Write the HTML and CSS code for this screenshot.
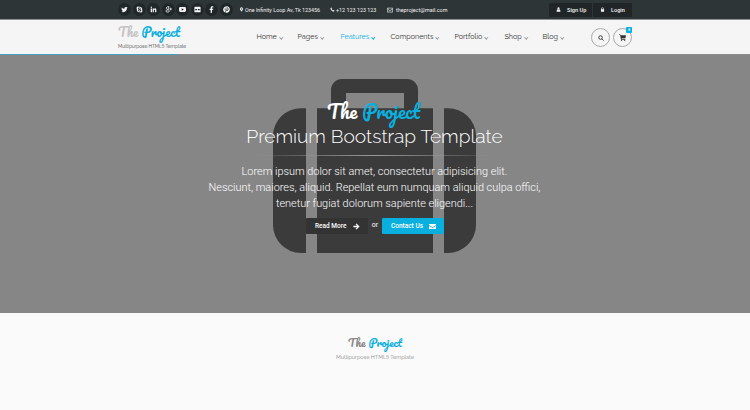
FILE: index.html
```html
<!DOCTYPE html>
<html lang="en">
<head>
<meta charset="utf-8">
<title>The Project</title>
<link rel="stylesheet" href="styles.css">
</head>
<body>
<div class="topbar">
  <div class="container topbar-inner">
    <ul class="social">
      <li><svg viewBox="0 0 16 16"><path d="M15 3.6l-1.500 1.500C13.600 10 10 14 5 14c-1.600 0-3-.4-4-1.200 1.500.1 2.800-.3 3.800-1.100-1.300-.1-2.200-.9-2.500-2h1.100C2 9.300 1.200 8.200 1.200 6.800l1.200.3C1.200 6.200.9 4.600 1.700 3.200 3.200 5 5.300 6 7.800 6.200 7.300 3.800 9 2 10.800 2c.9 0 1.600.3 2.200.9l1.700-.6-1.100 1.500z"/></svg></li>
      <li><svg viewBox="0 0 16 16"><path fill-rule="evenodd" d="M4.500 1C6 1 6.500 1.800 7 1.900 12 1.200 15 5 14.100 9c.9 1 1 2.500.4 3.700-.9 2-3.500 2.700-5.500 1.400C4 15 1 11.500 1.900 7 .3 4.200 2 1 4.500 1zm3.700 2.700C3.800 3.500 3.500 8 6.500 8.500l2.500.6c1.300.4.600 1.800-.7 1.800-2 0-1.800-1.500-3-1.500-2.200 1 .5 3 3 3 4.800 0 4.800-4.500 1.700-5.100L7.300 6.600C6 6.100 7 5.200 8.100 5.200c1.600 0 1.500 1.100 2.600 1.100 2-.8 0-2.600-2.500-2.600z"/></svg></li>
      <li><svg viewBox="0 0 16 16"><path d="M1.500 5.500h3V14h-3zM6 5.500h2.900v1.200C10.500 4.400 14.500 5 14.500 9v5h-3V9.500c0-2.500-2.600-2.200-2.600 0V14H6z"/><circle cx="3" cy="3" r="1.600"/></svg></li>
      <li><svg viewBox="0 0 16 16"><path fill="none" stroke="currentColor" stroke-width="1.800" d="M10 1.900H6.500C2 2 2 7.500 6 7.500c4-.2 3.500-5.300.5-5.600M6.500 7.500c0 1.500 3.500 2 3.500 4.200 0 3.200-8 3.200-8 0C2 9.500 5 9 7.500 9.300M13 4v6M10.500 7h5"/></svg></li>
      <li><svg viewBox="0 0 16 16"><path fill-rule="evenodd" d="M3 2.500h10q3 0 3 3v5q0 3-3 3H3q-3 0-3-3v-5q0-3 3-3zm3.300 2.800v5.400L11 8z"/></svg></li>
      <li><svg viewBox="0 0 16 16"><path fill-rule="evenodd" d="M2.500 1.500h11q1.500 0 1.500 1.500v10q0 1.500-1.500 1.500h-11Q1 14.500 1 13V3q0-1.500 1.500-1.500zM3 7v2.500h4V7zm6 0v2.500h4V7z"/></svg></li>
      <li><svg viewBox="0 0 16 16"><path d="M12 .8v2.600h-1.600C9.200 3.400 9 4 9 4.800v1.500h2.900l-.4 2.800H9V16H6V9.100H3.700V6.300H6V4.200C6 1.800 7.500.6 9.700.6z"/></svg></li>
      <li><svg viewBox="0 0 16 16"><path fill-rule="evenodd" d="M8 .5a7.500 7.500 0 11-2 14.700l1-3 .5-1.700c3 1.500 5-1 5-3.800C12.500 2.500 4 2 3.700 7c0 1.200.5 2.300 1.500 2.700l.4-1C4 6.500 5.500 4 8 4c3.500 0 3.200 5.600.8 5.600-1 0-1.300-.8-1-1.600l.6-2.200C7.300 4.700 6 6.500 6.600 8L5 14.900A7.500 7.500 0 018 .5z"/></svg></li>
    </ul>
    <ul class="contact">
      <li class="address"><svg viewBox="0 0 16 16"><path fill-rule="evenodd" d="M8 1a5 5 0 015 5c0 3-3.500 5.500-5 9-1.500-3.500-5-6-5-9a5 5 0 015-5zm0 3a2 2 0 100 4 2 2 0 000-4z"/></svg><span>One Infinity Loop Av, Tk 123456</span></li>
      <li class="phone"><svg viewBox="0 0 16 16"><path d="M2 3l2.500-1.500 2 3.500L5 6.500C6 8.500 7.500 10 9.500 11L11 9.500l3.500 2L13 14C8 16 0 8 2 3z"/></svg><span>+12 123 123 123</span></li>
      <li class="email"><svg viewBox="0 0 16 16"><path fill="none" stroke="currentColor" stroke-width="1.700" d="M1 3h14v10.500H1zM1 5l7 5 7-5"/></svg><span>theproject@mail.com</span></li>
    </ul>
    <div class="account">
      <a class="acct signup"><svg viewBox="0 0 16 16"><circle cx="8" cy="4.500" r="3.500"/><path d="M2 15q-1-7 3.500-7.500 2.500 1.500 5 0Q15 8 14 15z"/></svg><span>Sign Up</span></a>
      <a class="acct login"><svg viewBox="0 0 16 16"><path fill-rule="evenodd" d="M3 7h1V5.500a4 4 0 018 0V7h1v8H3zm3 0h4V5.500a2 2 0 00-4 0z"/></svg><span>Login</span></a>
    </div>
  </div>
</div>
<header class="header">
  <div class="container header-inner">
    <div class="brand">
      <div class="logo"><span>The</span> <b>Project</b></div>
      <div class="slogan">Multipurpose HTML5 Template</div>
    </div>
    <nav class="nav">
      <a class="n-home"><span>Home</span><i></i></a>
      <a class="n-pages"><span>Pages</span><i></i></a>
      <a class="n-features active"><span>Features</span><i></i></a>
      <a class="n-components"><span>Components</span><i></i></a>
      <a class="n-portfolio"><span>Portfolio</span><i></i></a>
      <a class="n-shop"><span>Shop</span><i></i></a>
      <a class="n-blog"><span>Blog</span><i></i></a>
    </nav>
    <div class="tools">
      <a class="round"><svg viewBox="0 0 16 16"><path fill="none" stroke="currentColor" stroke-width="2.400" d="M10.500 10.500L15 15M6.800 2a4.800 4.800 0 100 9.600 4.800 4.800 0 000-9.600z"/></svg></a>
      <a class="round"><svg class="cart" viewBox="0 0 16 16"><path d="M0 1h3.500L4 3h12l-1.200 6.500-9 .8.200 1.200h8.500V13H4.500L2.500 2.500H0z"/><circle cx="5.800" cy="14.500" r="1.400"/><circle cx="13" cy="14.500" r="1.400"/></svg><em class="badge">8</em></a>
    </div>
  </div>
</header>
<section class="hero">
  <svg class="suitcase" viewBox="0 0 204 176" preserveAspectRatio="none"><path d="M58 30V12A11 11 0 0169 1h65a11 11 0 0111 11v18h-14V15H73v15zM33 30v144h-5A28 28 0 010 147V57A28 28 0 0128 30zM44 30h116v144H44zM171 30h4a28 28 0 0128 27v90a28 28 0 01-28 27h-4z"/></svg>
  <div class="hero-content">
    <div class="logo hero-logo"><span>The</span> <b>Project</b></div>
    <h1>Premium Bootstrap Template</h1>
    <div class="separator"></div>
    <p><span>Lorem ipsum dolor sit amet, consectetur adipisicing elit.</span><br><span>Nesciunt, maiores, aliquid. Repellat eum numquam aliquid culpa offici,</span><br><span>tenetur fugiat dolorum sapiente eligendi...</span></p>
    <div class="actions">
      <a class="btn dark"><span>Read More</span><svg viewBox="0 0 16 16"><path d="M8 1l7 7-7 7-2-2 3.300-3.500H1v-3h8.300L6 3z"/></svg></a>
      <span class="or">or</span>
      <a class="btn blue"><span>Contact Us</span><svg viewBox="0 0 16 16"><path d="M0 2.500h16v1.800L8 9.500 0 4.300zM0 6l8 5.200L16 6v7.500H0z"/></svg></a>
    </div>
  </div>
</section>
<footer class="footer">
  <div class="logo footer-logo"><span>The</span> <b>Project</b></div>
  <div class="footer-slogan">Multipurpose HTML5 Template</div>
</footer>
</body>
</html>
```

FILE: styles.css
```css
* { box-sizing: border-box; }
body { margin: 0; width: 750px; height: 410px; overflow: hidden; background: #fafafa; font-family: Roboto, "Liberation Sans", sans-serif; color: #555; }
ul { list-style: none; margin: 0; padding: 0; }
svg { display: block; fill: currentColor; flex: none; }
.container { width: 514px; margin-left: 118px; display: flex; }
.topbar { height: 20px; background: #2e3537; border-bottom: 1px solid #8e9192; color: #f2f2f2; }
.topbar-inner { height: 19px; align-items: center; }
.social { display: flex; gap: 1.500px; width: 121px; }
.social li { width: 13px; height: 13px; border-radius: 50%; background: #202729; display: flex; align-items: center; justify-content: center; }
.social svg { width: 7px; height: 7px; }
.contact { display: flex; font-size: 5.400px; white-space: nowrap; flex: 1; }
.contact li { display: flex; align-items: center; }
.contact svg { width: 5px; height: 5px; margin-right: 1px; }
.address { width: 91px; }
.phone { width: 57px; }
.contact .email svg { width: 6px; height: 6px; margin-right: 3px; }
.account { display: flex; gap: 1px; }
.acct { height: 14px; background: #202628; border-radius: 1px; display: flex; align-items: center; font-size: 5.600px; font-weight: 500; }
.acct svg { width: 5px; height: 5px; margin-right: 6px; }
.signup { width: 43px; padding-left: 7px; }
.login { width: 39px; padding-left: 7px; }
.header { height: 35px; background: linear-gradient(90deg, #45a3c0 0 178px, #8b8b8b 178px) bottom / 100% 1px no-repeat, #f5f5f5; }
.header-inner { height: 34px; }
.brand { width: 139px; padding-top: 3px; }
.logo { font-family: Pacifico, cursive; font-weight: 400; white-space: nowrap; }
.logo b { color: #09afdf; font-weight: 400; }
.brand .logo { font-size: 12.500px; line-height: 18px; height: 21px; color: #c4c4c4; }
.slogan { font-size: 4.750px; line-height: 6px; font-family: Raleway, Lato, sans-serif; font-variant-numeric: lining-nums; color: #444; white-space: nowrap; }
.nav { display: flex; width: 336px; height: 34px; align-items: center; font-family: Raleway, Lato, sans-serif; font-size: 7.200px; color: #333; }
.nav a { display: flex; align-items: center; gap: 3px; flex: none; white-space: nowrap; }
.nav span { position: relative; top: -.5px; }
.nav i { width: 2.500px; height: 2.500px; border: solid #999; border-width: 0 .7px .7px 0; transform: rotate(45deg); }
.nav .active { color: #09afdf; }
.nav .active i { border-color: #09afdf; }
.n-home { width: 41px; }
.n-pages { width: 43px; }
.n-features { width: 50px; }
.n-components { width: 64px; }
.n-portfolio { width: 50px; }
.n-shop { width: 38px; }
.n-blog { width: 28px; }
.tools { display: flex; gap: 3px; padding-top: 8px; }
.round { flex: none; position: relative; width: 19px; height: 19px; border: 1px solid #aaa; border-radius: 50%; display: flex; align-items: center; justify-content: center; color: #333; }
.round svg { width: 6px; height: 6px; }
.round .cart { width: 7px; height: 7px; }
.badge { position: absolute; top: -2px; right: -1px; width: 6px; height: 6px; border-radius: 1px; background: #09afdf; color: #fff; font: 4px/6px Roboto, sans-serif; text-align: center; }
.hero { position: relative; height: 258px; background: #868686; }
.suitcase { position: absolute; left: 273px; top: 23px; width: 204px; height: 177px; color: #3b3b3b; }
.hero-content { position: relative; display: flex; flex-direction: column; align-items: center; padding: 44px 1px 0 0; color: #fff; }
.hero-logo { font-size: 18.800px; line-height: 26px; height: 25px; margin-right: 2px; }
h1 { margin: 0; font: 300 19.200px/24px Raleway, Lato, sans-serif; white-space: nowrap; }
.separator { width: 257px; height: 1px; margin-top: 7px; background: linear-gradient(90deg, transparent, #999, transparent); }
p { margin: 8px 0 0; font-weight: 300; font-size: 10.900px; line-height: 16px; text-align: center; white-space: nowrap; }
.actions { display: flex; margin: 6px 0 0 1px; height: 16px; }
.btn { width: 62px; height: 16px; display: flex; align-items: center; justify-content: space-between; padding: 0 8px 0 9px; font-size: 6.500px; font-weight: 500; border-radius: 1px; white-space: nowrap; }
.btn svg { width: 7px; height: 7px; }
.dark { background: #333; }
.blue { background: #09afdf; }
.or { width: 14px; text-align: center; font-size: 7px; line-height: 15px; }
.footer { display: flex; flex-direction: column; align-items: center; padding-top: 21px; }
.footer-logo { font-size: 10.900px; line-height: 17px; height: 19px; color: #888; }
.footer-slogan { font-size: 5.450px; line-height: 8px; font-family: Raleway, Lato, sans-serif; font-variant-numeric: lining-nums; color: #888; }
```
